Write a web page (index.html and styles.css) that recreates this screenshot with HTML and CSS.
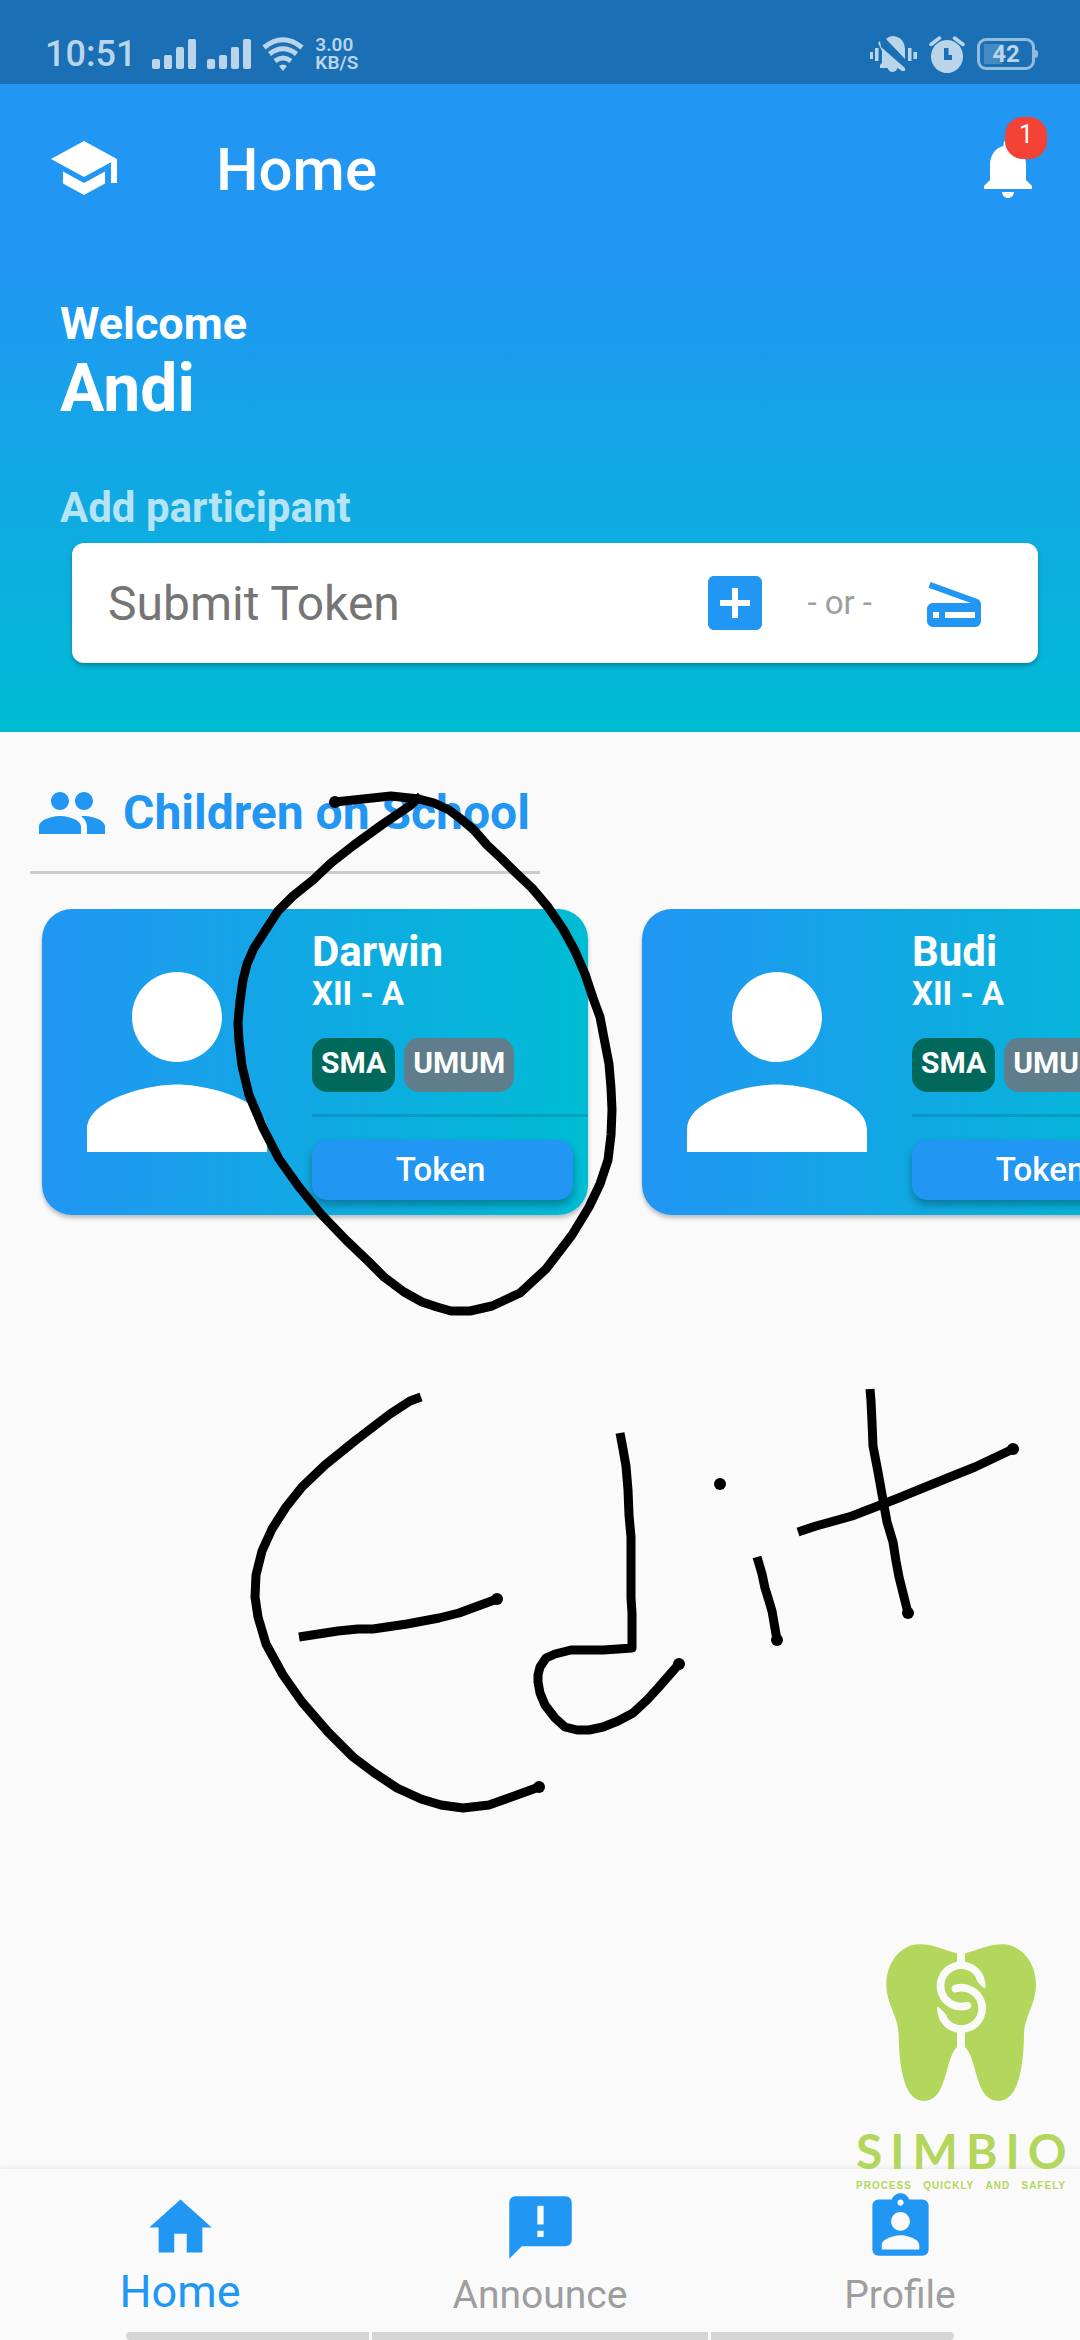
FILE: index.html
```
<!DOCTYPE html>
<html lang="en">
<head>
<meta charset="utf-8">
<meta name="viewport" content="width=device-width, initial-scale=1">
<title>Home</title>
<link rel="stylesheet" href="styles.css">
</head>
<body>
<div class="screen">
  <div class="status">
    <div class="status-group">
      <span class="clock">10:51</span>
      <svg class="signal" viewBox="0 0 44 30"><rect y="20" width="8" height="10" rx="2"/><rect x="12" y="16" width="8" height="14" rx="2"/><rect x="24" y="8" width="8" height="22" rx="2"/><rect x="36" width="8" height="30" rx="2"/></svg>
      <svg class="signal" viewBox="0 0 44 30"><rect y="20" width="8" height="10" rx="2"/><rect x="12" y="16" width="8" height="14" rx="2"/><rect x="24" y="8" width="8" height="22" rx="2"/><rect x="36" width="8" height="30" rx="2"/></svg>
      <svg class="wifi" viewBox="0 0 42 34"><g fill="none" stroke="currentColor" stroke-width="5"><path d="M2 10.500Q21-5 40 10.500"/><path d="M7.500 17Q21 6.500 34.500 17"/><path d="M13 24Q21 18 29 24"/></g><path d="M17 29q4-3 8 0l-4 5z"/></svg>
      <div class="speed"><span>3.00</span><span>KB/S</span></div>
    </div>
    <div class="status-group status-right">
      <svg class="mute" viewBox="0 0 47 36"><path d="M0 16h3v7H0zM5 12h3.500v13H5zM38 12h3.500v13H38zM43.500 16H47v7h-3.500zM11 11l24 21v3h-3l-4.500-3q-1.500 4-5 4t-5-4H10v-3l2-2V15L8 7l2-2zM16 3q3-3 7-3 11 1 12 13v10z"/></svg>
      <svg class="alarm" viewBox="0 0 36 37"><path fill-rule="evenodd" d="M18 4a16 16.500 0 1 0 .01 0zM15 12h4.500v7H23v5h-8z"/><path d="M2 8.500 10.500 2M34 8.500 25.500 2" fill="none" stroke="currentColor" stroke-width="3.500" stroke-linecap="round"/></svg>
      <span class="battery">42</span>
    </div>
  </div>

  <header class="appbar">
    <svg class="icon" viewBox="0 0 24 24"><path d="M5 13.180v4L12 21l7-3.820v-4L12 17l-7-3.820zM12 3 1 9l11 6 9-4.910V17h2V9L12 3z"/></svg>
    <h1 class="title">Home</h1>
    <button class="bell" type="button" aria-label="Notifications">
      <svg class="icon" viewBox="0 0 24 24"><path d="M12 22c1.100 0 2-.9 2-2h-4c0 1.100.890 2 2 2zm6-6v-5c0-3.070-1.640-5.640-4.500-6.320V4c0-.830-.670-1.500-1.500-1.500s-1.500.670-1.500 1.500v.680C7.630 5.360 6 7.920 6 11v5l-2 2v1h16v-1l-2-2z"/></svg>
      <span class="badge">1</span>
    </button>
  </header>

  <section class="hero">
    <p class="welcome">Welcome</p>
    <p class="name">Andi</p>
    <label class="add-label" for="token">Add participant</label>
    <form class="token-form">
      <input class="token-input" id="token" type="text" placeholder="Submit Token">
      <button class="icon-button" type="button" aria-label="Add"><svg class="icon" viewBox="0 0 24 24"><path d="M19 3H5c-1.110 0-2 .9-2 2v14c0 1.100.890 2 2 2h14c1.100 0 2-.9 2-2V5c0-1.100-.9-2-2-2zm-2 10h-4v4h-2v-4H7v-2h4V7h2v4h4v2z"/></svg></button>
      <span class="or">- or -</span>
      <button class="icon-button" type="button" aria-label="Scan"><svg class="icon" viewBox="0 0 24 24"><path d="M19.800 10.700 4.200 5l-.7 1.900L17.600 12H5c-1.100 0-2 .9-2 2v4c0 1.100.9 2 2 2h14c1.100 0 2-.9 2-2v-5.500c0-.8-.5-1.600-1.200-1.800zM7 17H5v-2h2v2zm12 0H9v-2h10v2z"/></svg></button>
    </form>
  </section>

  <main class="content">
    <div class="section-head">
      <svg class="icon" viewBox="0 0 24 24"><path d="M16 11c1.660 0 2.990-1.340 2.990-3S17.660 5 16 5s-3 1.340-3 3 1.340 3 3 3zm-8 0c1.660 0 2.990-1.340 2.990-3S9.660 5 8 5 5 6.340 5 8s1.340 3 3 3zm0 2c-2.330 0-7 1.170-7 3.500V19h14v-2.500c0-2.330-4.670-3.500-7-3.500zm8 0c-.290 0-.620.020-.970.050 1.160.840 1.970 1.970 1.970 3.450V19h6v-2.500c0-2.330-4.670-3.500-7-3.500z"/></svg>
      <h2 class="section-title">Children on School</h2>
    </div>
    <div class="cards">
      <article class="card">
        <svg class="avatar" viewBox="0 0 24 24"><path d="M12 12c2.210 0 4-1.790 4-4s-1.790-4-4-4-4 1.790-4 4 1.790 4 4 4zm0 2c-2.670 0-8 1.340-8 4v2h16v-2c0-2.660-5.330-4-8-4z"/></svg>
        <div class="info">
          <h3 class="child">Darwin</h3>
          <p class="class-name">XII - A</p>
          <div class="chips"><span class="chip chip-green">SMA</span><span class="chip chip-grey">UMUM</span></div>
          <hr class="rule">
          <button class="token-button" type="button">Token</button>
        </div>
      </article>
      <article class="card">
        <svg class="avatar" viewBox="0 0 24 24"><path d="M12 12c2.210 0 4-1.790 4-4s-1.790-4-4-4-4 1.790-4 4 1.790 4 4 4zm0 2c-2.670 0-8 1.340-8 4v2h16v-2c0-2.660-5.330-4-8-4z"/></svg>
        <div class="info">
          <h3 class="child">Budi</h3>
          <p class="class-name">XII - A</p>
          <div class="chips"><span class="chip chip-green">SMA</span><span class="chip chip-grey">UMUM</span></div>
          <hr class="rule">
          <button class="token-button" type="button">Token</button>
        </div>
      </article>
    </div>
  </main>

  <nav class="nav">
    <div class="tabs">
      <a class="tab tab-active" href="#home"><svg class="tab-icon" viewBox="0 0 24 24"><path d="M10 20v-6h4v6h5v-8h3L12 3 2 12h3v8z"/></svg>Home</a>
      <a class="tab" href="#announce"><svg class="tab-icon" viewBox="0 0 24 24"><path d="M20 2H4c-1.100 0-1.990.9-1.990 2L2 22l4-4h14c1.100 0 2-.9 2-2V4c0-1.100-.9-2-2-2zm-7 9h-2V5h2v6zm0 4h-2v-2h2v2z"/></svg>Announce</a>
      <a class="tab" href="#profile"><svg class="tab-icon" viewBox="0 0 24 24"><path d="M19 3h-4.180C14.400 1.840 13.300 1 12 1s-2.400.840-2.820 2H5c-1.100 0-2 .9-2 2v14c0 1.100.9 2 2 2h14c1.100 0 2-.9 2-2V5c0-1.100-.9-2-2-2zm-7 0c.550 0 1 .450 1 1s-.450 1-1 1-1-.450-1-1 .450-1 1-1zm0 4c1.660 0 3 1.340 3 3s-1.340 3-3 3-3-1.340-3-3 1.340-3 3-3zm6 12H6v-1.400c0-2 4-3.100 6-3.100s6 1.100 6 3.100V19z"/></svg>Profile</a>
    </div>
    <div class="gesture"><span class="seg"></span><span class="seg seg-mid"></span><span class="seg"></span></div>
  </nav>

  <div class="logo">
    <svg class="tooth" viewBox="195 74 450 474">
      <g fill="#b3d65c">
        <path d="M408 102C370 94 342 75 295 75 240 75 196 130 196 195c0 60 36 96 37 150 1 90 14 200 75 200 72 0 62-126 100-162z"/>
        <path d="M432 102c38-8 66-27 113-27 55 0 100 55 100 120 0 60-35 96-36 150-1 90-15 200-76 200-72 0-63-126-101-162z"/>
        <path d="M406 140h28v187h-28z"/>
      </g>
      <g fill="none" stroke="#fafafa" stroke-width="23" stroke-linecap="round">
        <path d="M476 172A62 62 0 1 0 439 259"/>
        <path d="M366 295A62 62 0 1 0 403 208"/>
      </g>
      <path fill="#fafafa" d="M464 176 484 165Q494 182 494 205L487 205 470 188zM378 291 358 302Q348 285 348 262L355 265 372 282z"/>
    </svg>
    <span class="brand">SIMBIO</span>
    <div class="tagline"><span>PROCESS</span> <span>QUICKLY</span> <span>AND</span> <span>SAFELY</span></div>
  </div>

  <svg class="ink" viewBox="0 0 1080 2340" aria-hidden="true">
    <g fill="none" stroke="#000" stroke-width="9" stroke-linejoin="round">
      <path d="M335 802 391 796 419 799 434 803 449 810 461 819 474 830 487 845 502 859 515 872 532 888 548 907 563 929 575 951 585 974 593 998 600 1017 604 1038 609 1064 611 1088 612 1110 611 1135 608 1160 600 1184 589 1207 572 1235 546 1269 520 1293 492 1306 470 1311H451L437 1307 422 1302 404 1292 384 1277 368 1261 346 1240 321 1214 299 1187 279 1159 263 1128 249 1095 242 1066 239 1041 238 1023 240 1001 243 980 247 964 254 948 265 931 278 911 293 896 313 880 331 863 354 845 383 824 411 805 421 796"/>
      <path d="M421 1397 410 1401 390 1414 356 1440 325 1465 302 1487 286 1507 272 1529 262 1551 256 1575 255 1597 258 1617 266 1644 283 1675 302 1702 328 1732 353 1757 373 1772 397 1788 421 1799 441 1805 463 1808 489 1805 539 1787"/>
      <path d="M299 1637 338 1631 358 1629H373L407 1624 439 1618 459 1613 497 1599"/>
      <path d="M620 1433 623 1449 626 1466 628 1490 629 1515 631 1537V1598L632 1613V1648L618 1649 603 1650H571L555 1654 546 1658 540 1667 538 1675V1682L540 1693 545 1705 555 1718 565 1727 577 1730H589L603 1727 618 1721 633 1713 647 1700 658 1688 679 1664"/>
      <path d="M757 1557 762 1574 765 1588 769 1601 772 1611 777 1640"/>
      <path d="M870 1389 871 1401 872 1422 873 1446 878 1472 883 1500 887 1522 893 1542 896 1561 899 1577 908 1613"/>
      <path d="M798 1532 816 1526 852 1516 896 1499 923 1488 950 1477 975 1467 1013 1449"/>
    </g>
    <circle cx="335" cy="802" r="6"/><circle cx="539" cy="1787" r="6"/><circle cx="497" cy="1599" r="6"/><circle cx="679" cy="1664" r="6"/><circle cx="720" cy="1484" r="6"/><circle cx="777" cy="1640" r="6"/><circle cx="908" cy="1613" r="6"/><circle cx="1013" cy="1449" r="6"/>
  </svg>
</div>
</body>
</html>
```
FILE: styles.css
```
* { box-sizing: border-box; margin: 0; }
body { background: #fafafa; font-family: Roboto, "Noto Sans", sans-serif; }
svg { display: block; fill: currentColor; flex: none; }
button { border: 0; padding: 0; background: none; font: inherit; color: inherit; }

.screen { position: relative; display: flex; flex-direction: column; min-height: 100vh; overflow: hidden; }

.status { display: flex; justify-content: space-between; height: 84px; padding: 24px 45px 0 45px; background: #1a6fb5; color: #bad4e9; }
.status-group { display: flex; align-items: center; gap: 11px; height: 60px; }
.status-right { gap: 12px; }
.clock { margin-right: 5px; font-size: 36px; font-weight: 500; line-height: 60px; }
.signal { width: 44px; height: 30px; }
.wifi { width: 42px; height: 34px; }
.speed { display: flex; flex-direction: column; font-size: 19px; font-weight: 600; line-height: 18px; }
.mute { width: 47px; height: 36px; }
.alarm { width: 36px; height: 37px; }
.battery { position: relative; width: 58px; height: 32px; border: 3px solid #93bbdc; border-radius: 9px; background: linear-gradient(90deg, #448cc5 18px, transparent 18px) 4px 3px / 46px 20px no-repeat; font-size: 24px; font-weight: 700; line-height: 26px; text-align: center; }
.battery::after { content: ""; position: absolute; top: 9px; right: -6px; width: 3px; height: 8px; border-radius: 0 3px 3px 0; background: #93bbdc; }

.icon { width: 72px; height: 72px; }
.appbar { display: flex; align-items: center; height: 168px; padding: 0 36px 0 48px; background: #2196f3; color: #fff; }
.title { flex: 1; padding: 3px 0 0 96px; font-size: 60px; font-weight: 500; line-height: 72px; }
.bell { position: relative; height: 96px; }
.badge { position: absolute; top: -3px; right: -3px; width: 42px; height: 42px; border-radius: 18px; background: #f44336; font-size: 25px; line-height: 36px; text-align: center; }

.hero { padding: 45px 42px 69px 60px; background: linear-gradient(#2196f3, #00bcd4); color: #fff; }
.welcome { font-size: 45px; font-weight: 700; line-height: 54px; }
.name { font-size: 66px; font-weight: 700; line-height: 75px; }
.add-label { display: block; margin-top: 58px; font-size: 42px; font-weight: 700; line-height: 48px; color: rgba(255, 255, 255, .7); }
.token-form { display: flex; align-items: center; height: 120px; margin: 11px 0 0 12px; padding: 0 48px 0 36px; border-radius: 12px; background: #fff; box-shadow: 0 3px 4px rgba(0, 0, 0, .25); color: #2196f3; }
.token-input { flex: 1; min-width: 0; padding: 2px 0 0; border: 0; outline: 0; background: none; font: 400 48px/60px Roboto, "Noto Sans", sans-serif; color: #212121; }
.token-input::placeholder { color: #757575; opacity: 1; }
.or { padding: 0 46px 0 36px; font-size: 33px; line-height: 40px; color: #9e9e9e; }

.content { flex: 1; padding-top: 45px; }
.section-head { display: flex; align-items: center; gap: 15px; width: fit-content; margin-left: 30px; padding: 0 10px 22px 6px; border-bottom: 3px solid #ccc; color: #2196f3; }
.section-title { font-size: 48px; font-weight: 700; line-height: 72px; }
.cards { display: flex; gap: 54px; padding: 35px 0 12px 42px; overflow: hidden; }
.card { display: flex; align-items: center; flex: none; width: 546px; height: 306px; border-radius: 30px; background: linear-gradient(90deg, #2196f3, #00bcd4); box-shadow: 0 3px 4px rgba(0, 0, 0, .25); color: #fff; }
.avatar { width: 270px; height: 270px; }
.info { flex: 1; height: 306px; padding-top: 18px; }
.child { font-size: 42px; font-weight: 700; line-height: 50px; }
.class-name { font-size: 33px; font-weight: 700; line-height: 34px; }
.chips { display: flex; gap: 9px; margin-top: 27px; }
.chip { height: 54px; padding: 0 9px; border-radius: 15px; font-size: 30px; font-weight: 700; line-height: 50px; }
.chip-green { background: #00695c; }
.chip-grey { background: #607d8b; }
.rule { height: 3px; margin-top: 22px; border: 0; background: rgba(0, 0, 0, .12); }
.token-button { display: block; width: 261px; height: 60px; margin-top: 23px; padding-right: 4px; border-radius: 15px; background: #2196f3; box-shadow: 0 5px 8px rgba(0, 0, 0, .3); font-size: 33px; font-weight: 500; line-height: 60px; }

.nav { padding-top: 21px; background: #fafafa; box-shadow: 0 -2px 4px rgba(0, 0, 0, .06); }
.tabs { display: grid; grid-template-columns: repeat(3, 1fr); }
.tab { display: flex; flex-direction: column; align-items: center; height: 135px; color: #9e9e9e; font-size: 39px; line-height: 60px; text-decoration: none; }
.tab-active { color: #2196f3; font-size: 45px; line-height: 54px; }
.tab-icon { width: 75px; height: 75px; color: #2196f3; }
.gesture { display: flex; justify-content: center; gap: 3px; height: 8px; margin-top: 7px; padding: 0 126px; }
.seg { flex: 243; background: #d5d5d5; }
.seg-mid { flex: 336; }
.seg:first-child { border-radius: 4px 0 0 4px; }
.seg:last-child { border-radius: 0 4px 4px 0; }

.logo { position: absolute; right: 14px; bottom: 148px; display: flex; flex-direction: column; width: 210px; color: #b3d65c; }
.tooth { align-self: center; width: 150px; height: 158px; }
.brand { margin-top: 20px; font-family: Lato, sans-serif; font-size: 48px; font-weight: 700; line-height: 58px; letter-spacing: 8px; }
.tagline { display: flex; justify-content: space-between; font-family: "Liberation Sans", sans-serif; font-size: 10px; font-weight: 700; line-height: 12px; letter-spacing: 1px; }

.ink { position: absolute; top: 0; left: 0; width: 100%; fill: #000; pointer-events: none; }
```
